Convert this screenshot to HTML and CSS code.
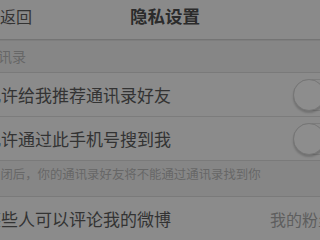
FILE: index.html
```html
<!DOCTYPE html>
<html lang="zh">
<head>
<meta charset="utf-8">
<link rel="stylesheet" href="styles.css">
</head>
<body>
<div class="screen">
  <header class="nav">
    <div class="back">返回</div>
    <div class="title">隐私设置</div>
  </header>
  <div class="section-label"><span class="shift">通讯录</span></div>
  <div class="group">
    <div class="row">
      <span class="label shift">允许给我推荐通讯录好友</span>
      <span class="switch"><span class="knob"></span></span>
    </div>
    <div class="row">
      <span class="label shift">允许通过此手机号搜到我</span>
      <span class="switch"><span class="knob"></span></span>
    </div>
  </div>
  <div class="hint"><span class="shift-s">关闭后，你的通讯录好友将不能通过通讯录找到你</span></div>
  <div class="group">
    <div class="row">
      <span class="label shift">某些人可以评论我的微博</span>
      <span class="value">我的粉丝</span>
    </div>
  </div>
</div>
</body>
</html>
```

FILE: styles.css
```css
html, body {
  margin: 0;
  padding: 0;
  background: #878787;
}
body {
  width: 320px;
  height: 240px;
  overflow: hidden;
  font-family: "Noto Sans CJK SC", "Noto Sans", sans-serif;
}
.screen {
  width: 320px;
}
.nav {
  display: flex;
  align-items: center;
  background: #8a8a8a;
  border-bottom: 1px solid #747474;
  box-shadow: 0 1px 0 #7e7e7e;
  padding-bottom: 8px;
  box-sizing: border-box;
  height: 40px;
}
.back {
  width: 130px;
  font-size: 16px;
  color: #333;
  line-height: 1;
}
.title {
  font-size: 17.5px;
  font-weight: bold;
  color: #2b2b2b;
  line-height: 1;
}
.section-label {
  height: 31px;
  box-sizing: border-box;
  padding-top: 7px;
  font-size: 14px;
  line-height: 16px;
  color: #676767;
  background: #868686;
  margin-top: 1px;
}
.shift {
  margin-left: -16px;
}
.shift-s {
  margin-left: -12px;
}
.group {
  background: #8b8b8b;
  border-top: 1px solid #7a7a7a;
  border-bottom: 1px solid #7a7a7a;
}
.row {
  height: 43px;
  display: flex;
  align-items: center;
  justify-content: space-between;
}
.row + .row {
  border-top: 1px solid #7c7c7c;
}
.label {
  font-size: 17px;
  color: #333;
  white-space: nowrap;
}
.switch {
  width: 54px;
  height: 32px;
  border-radius: 16px;
  border: 1px solid #7c7c7c;
  box-sizing: border-box;
  margin-right: -27px;
  position: relative;
  flex: none;
}
.knob {
  position: absolute;
  left: -1px;
  top: -1px;
  width: 32px;
  height: 32px;
  border-radius: 50%;
  background: #8d8d8d;
  box-sizing: border-box;
  border: 1px solid #767676;
  box-shadow: 0 2px 2px rgba(0,0,0,0.18);
}
.hint {
  height: 35px;
  box-sizing: border-box;
  padding-top: 6px;
  font-size: 12.4px;
  line-height: 14px;
  color: #676767;
  white-space: nowrap;
  background: #868686;
}
.value {
  font-size: 16px;
  color: #5e5e5e;
  white-space: nowrap;
  margin-right: -14px;
  flex: none;
}
```
